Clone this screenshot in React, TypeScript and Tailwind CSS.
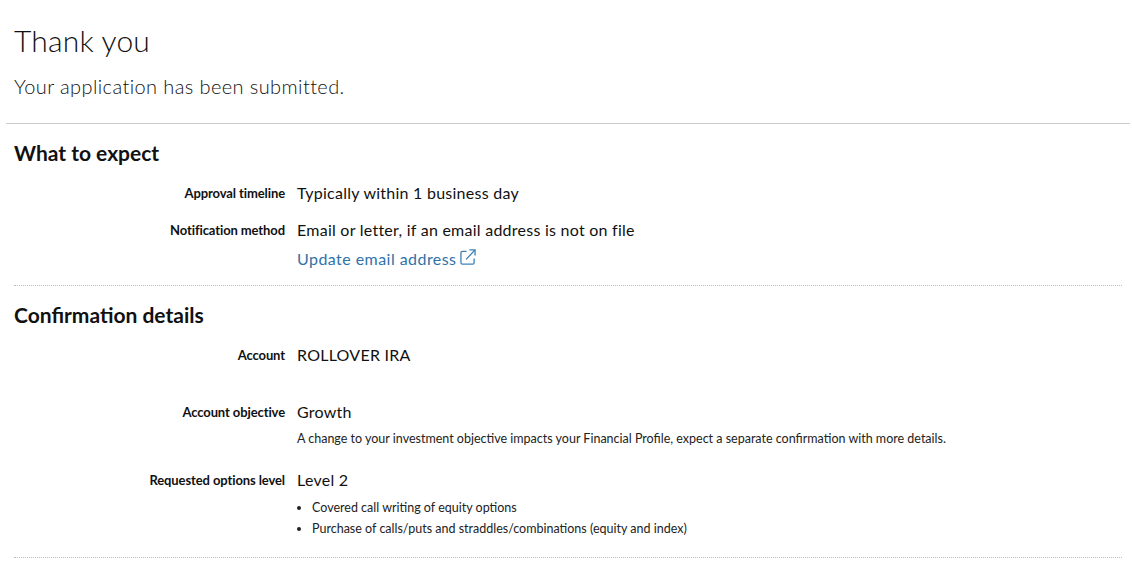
const fontStack = "font-['Lato','Noto_Sans',sans-serif]";

type Row = {
  label: string;
  value: string;
};

function DetailRow({ label, value, className = "", children }: Row & { className?: string; children?: React.ReactNode }) {
  return (
    <div className={`flex ${className}`}>
      <div className="w-[271px] shrink-0 pt-[1px] text-right text-[13px] leading-[20px] font-bold tracking-[-0.1px] text-[#111]">{label}</div>
      <div className="ml-3 flex-1">
        <div className="text-[16px] leading-[22px] text-[#111] tracking-[0.25px]">{value}</div>
        {children}
      </div>
    </div>
  );
}

export default function App() {
  return (
    <div className={`${fontStack} h-[569px] w-[1132px] overflow-hidden bg-white text-[#111]`}>
      <div className="px-[14px] pt-[22px]">
        <h1 className="text-[30px] leading-[36px] font-light tracking-[0.2px] text-[#111]">Thank you</h1>
        <p className="mt-[16px] text-[20px] leading-[24px] font-light tracking-[0.4px] text-[#111]">Your application has been submitted.</p>
      </div>

      <div className="ml-[6px] mr-[2px] mt-[25px] h-px bg-[#ccc]" />

      <section className="ml-[14px] mr-[10px] border-b border-dotted border-[#bbb] pb-[15px]">
        <h2 className="mt-[16px] text-[21px] leading-[26px] font-bold">What to expect</h2>
        <DetailRow className="mt-[16px]" label="Approval timeline" value="Typically within 1 business day" />
        <DetailRow className="mt-[15px]" label="Notification method" value="Email or letter, if an email address is not on file">
          <a className="mt-[7px] flex items-center gap-1 text-[16px] leading-[22px] tracking-[0.45px] text-[#2f72a8]" href="#">
            Update email address
            <svg width="16" height="16" viewBox="0 0 17 17" fill="none" stroke="#3f83b8" strokeWidth="1.4" className="-mt-1 -ml-px">
              <path d="M7 2.5H2.5a1.5 1.5 0 0 0-1.5 1.5v10.5A1.5 1.5 0 0 0 2.5 16h11a1.5 1.5 0 0 0 1.5-1.5V10" />
              <path d="M6.5 11 15.5 1.5M10 1h6v6" />
            </svg>
          </a>
        </DetailRow>
      </section>

      <section className="ml-[14px] mr-[10px] border-b border-dotted border-[#bbb] pb-[18px]">
        <h2 className="mt-[16px] text-[21px] leading-[26px] font-bold">Confirmation details</h2>
        <DetailRow className="mt-[16px]" label="Account" value="ROLLOVER IRA" />
        <DetailRow className="mt-[35px]" label="Account objective" value="Growth">
          <p className="mt-[7px] text-[12.5px] leading-[18px] text-[#222]">
            A change to your investment objective impacts your Financial Profile, expect a separate confirmation with more details.
          </p>
        </DetailRow>
        <DetailRow className="mt-[21px]" label="Requested options level" value="Level 2">
          <ul className="mt-[6px] list-disc pl-[15px] text-[12.5px] leading-[21px] text-[#222]">
            <li>Covered call writing of equity options</li>
            <li>Purchase of calls/puts and straddles/combinations (equity and index)</li>
          </ul>
        </DetailRow>
      </section>
    </div>
  );
}
